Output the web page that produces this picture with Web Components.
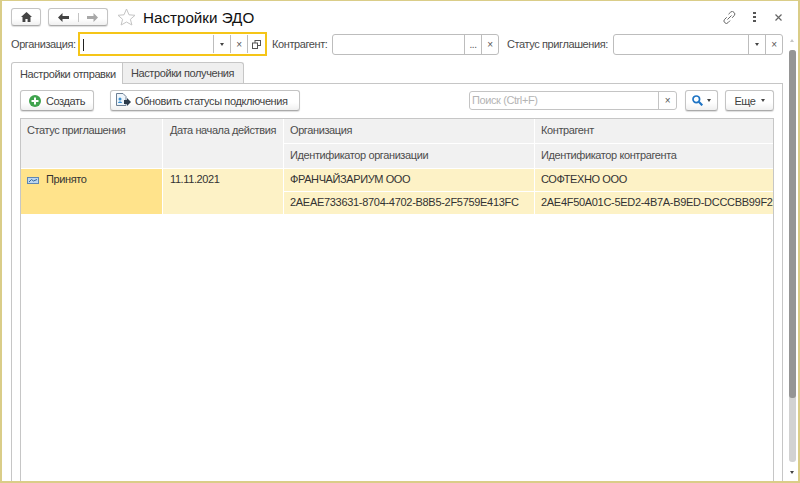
<!DOCTYPE html>
<html><head><meta charset="utf-8">
<style>
html,body{margin:0;padding:0;background:#fff}
body{font:11px "Liberation Sans",Arial,sans-serif;letter-spacing:-.4px;color:#4b4b4b}
</style></head><body>
<template id="t-btn"><style>
:host{display:inline-flex;box-sizing:border-box;height:21px;align-items:center;justify-content:center;gap:5px;background:linear-gradient(#fff,#fff 60%,#f0f0f0);border:1px solid #c4c4c4;border-bottom-color:#aaa;border-radius:3px;box-shadow:0 1px 1px #ddd;color:#3f3f3f;white-space:nowrap;flex:none}
</style><slot></slot></template>
<template id="t-field"><style>
:host{display:flex;box-sizing:border-box;height:21px;border:1px solid #bdbdbd;border-radius:3px;background:#fff;flex:none}
.i{flex:1}
</style><div class="i"></div><slot></slot></template>
<template id="t-cell"><style>
:host{display:flex;align-items:center;justify-content:center;box-sizing:border-box;width:17px;border-left:1px solid #bdbdbd;color:#555;font-size:10px;flex:none}
</style><slot></slot></template>
<template id="t-tab"><style>
:host{display:flex;box-sizing:border-box;align-items:center;height:21px;padding:0 8px;border:1px solid #c6c6c6;border-left:0;border-bottom:0;border-radius:0 3px 0 0;background:#efefef;color:#444;white-space:nowrap}
:host([active]){background:#fff;border-left:1px solid #c6c6c6;border-radius:3px 0 0 0;position:relative;z-index:1;height:22px}
</style><slot></slot></template>
<template id="t-hcell"><style>
:host{display:flex;box-sizing:border-box;padding:5px 6px 0;background:#f1f1f1;color:#4d4d4d;white-space:nowrap;overflow:hidden}
:host([w]){padding-left:7px}
</style><slot></slot></template>
<template id="t-cellb"><style>
:host{display:flex;box-sizing:border-box;padding:4px 6px 0;background:#fdf2c6;color:#333;white-space:nowrap;overflow:hidden}
:host([w]){padding-left:7px}
:host([hot]){background:#ffe38b}
:host([id2]){letter-spacing:-.3px;padding-right:0}
</style><slot></slot></template>
<template id="t-win"><style>
:host{display:flex;flex-direction:column;box-sizing:border-box;width:800px;height:483px;border:solid #dacd88;border-width:1px 2px 2px 2px;background:#fff;overflow:hidden;position:relative}
.top{display:flex;align-items:center;height:18px;margin:7px 0 0 9px;flex:none}
.top h1{font:400 15.2px "Liberation Sans",Arial,sans-serif;letter-spacing:0;color:#111;margin:0 0 0 7px}
.sp{flex:1}
.ico{display:flex;align-items:center;margin-right:16px}
.row{display:flex;align-items:center;height:24px;margin:6px 0 0 9px;flex:none}
.row>span{white-space:nowrap;flex:none}
.focus{box-sizing:border-box;display:flex;width:189px;height:24px;border:2px solid #f5c518;margin:0 5px 0 0;flex:none;padding:1px 0}
.focus .t{flex:1;position:relative}
.focus .t i{position:absolute;left:3px;top:4px;height:12px;width:1px;background:#222}
.focus span{width:17px;border-left:1px solid #bdbdbd;display:flex;align-items:center;justify-content:center;font-size:10px;color:#555;box-sizing:border-box}
.tabs{display:flex;margin:6px 0 0 9px;flex:none;height:21px}
.panel{box-sizing:border-box;flex:1;width:772px;margin-left:9px;border:1px solid #c6c6c6;border-bottom:0;padding:6px 8px 0;display:flex;flex-direction:column;min-height:0}
.bar{display:flex;align-items:center;height:21px;flex:none}
.tbl{box-sizing:border-box;margin-top:7px;flex:1;border:1px solid #c6c6c6;border-bottom:0;width:754px;min-height:0;display:grid;grid-template-columns:141px 120px 250px 1fr;grid-template-rows:24px 24px 22px 22px;gap:1px;background:#fff;align-content:start}
.s2{grid-row:span 2}
.scroll{position:absolute;left:787px;top:0;bottom:0;width:7px}
.thumb{position:absolute;left:0;top:49px;height:412px;width:7px;background:#d2d2d2;border-radius:3px}
.thumb2{position:absolute;left:0;top:49px;height:348px;width:7px;background:#959595;border-radius:3px}
.up{position:absolute;left:1px;top:38px;border:2.5px solid transparent;border-top:0;border-bottom:3px solid #c4c4c4}
.dn{position:absolute;left:1px;top:470px;border:2.5px solid transparent;border-bottom:0;border-top:3px solid #444}
.sr{box-sizing:border-box;width:208px;height:19px;margin-left:169px;border:1px solid #c4c4c4;border-radius:3px;display:flex;color:#b4b4b4;flex:none}
.sr b{flex:1;font-weight:400;padding:2px 0 0 2px}
.sr span{width:17px;border-left:1px solid #c4c4c4;display:flex;align-items:center;justify-content:center;color:#555;font-size:10px}
.ar{display:inline-block;border:2.5px solid transparent;border-bottom:0;border-top:3px solid #444}
</style>
<div class="top">
 <x-btn style="width:30px;height:18px"><svg width="11" height="10" viewBox="0 0 11 10"><path d="M5.5 0 0 5H1.5V10H4.4V7H6.6V10H9.5V5H11Z" fill="#444"/></svg></x-btn>
 <x-btn style="width:60px;height:18px;margin-left:7px;gap:0;justify-content:flex-start">
  <span style="width:29px;display:flex;justify-content:center;border-right:1px solid #c4c4c4"><svg width="11" height="9" viewBox="0 0 11 9"><path d="M4.5 0 0 4.5 4.5 9V6H11V3H4.5Z" fill="#444"/></svg></span>
  <span style="width:29px;display:flex;justify-content:center"><svg width="11" height="9" viewBox="0 0 11 9"><path d="M6.5 0 11 4.5 6.5 9V6H0V3H6.5Z" fill="#a8a8a8"/></svg></span>
 </x-btn>
 <svg style="margin-left:9px" width="19" height="18" viewBox="0 0 19 18"><path d="M9.5 1 12 6.8 18 7.3 13.4 11.3 14.9 17 9.5 14 4.1 17 5.6 11.3 1 7.3 7 6.8Z" fill="#fff" stroke="#c4c4c4"/></svg>
 <h1>Настройки ЭДО</h1>
 <div class="sp"></div>
 <div class="ico">
  <svg width="13" height="13" viewBox="0 0 13 13" fill="none" stroke="#666"><path d="M5.5 3.2 7.6 1.2a2.2 2.2 0 0 1 3.4 .2 2.2 2.2 0 0 1 .2 3.2L9.2 6.8M7 9.6 5 11.7a2.2 2.2 0 0 1-3.3-.1 2.2 2.2 0 0 1-.1-3.2L3.7 6.3M4.5 8.5 8.5 4.5"/></svg>
  <svg style="margin-left:17px" width="3" height="10" viewBox="0 0 3 10" fill="#555"><rect y="0" width="3" height="2"/><rect y="4" width="3" height="2"/><rect y="8" width="3" height="2"/></svg>
  <svg style="margin-left:19px" width="7" height="7" viewBox="0 0 7 7" stroke="#666" stroke-width="1.2"><path d="M.5 .5 6.5 6.5M6.5 .5 .5 6.5"/></svg>
 </div>
</div>
<div class="row">
 <span style="width:67px">Организация:</span>
 <div class="focus"><div class="t"><i></i></div><span><em class="ar"></em></span><span>×</span><span style="width:18px"><svg width="9" height="9" viewBox="0 0 9 9" fill="none" stroke="#555"><rect x="3" y=".5" width="5.5" height="5"/><rect x=".5" y="3" width="5" height="5.5" fill="#fff"/></svg></span></div>
 <span style="width:60px">Контрагент:</span>
 <x-field style="width:167px"><x-cell>...</x-cell><x-cell>×</x-cell></x-field>
 <span style="margin-left:8px;width:106px">Статус приглашения:</span>
 <x-field style="width:170px"><x-cell><em class="ar"></em></x-cell><x-cell>×</x-cell></x-field>
</div>
<div class="tabs"><x-tab active style="width:112px">Настройки отправки</x-tab><x-tab style="width:121px">Настройки получения</x-tab></div>
<div class="panel">
 <div class="bar">
  <x-btn style="width:74px"><svg width="12" height="12" viewBox="0 0 12 12"><circle cx="6" cy="6" r="6" fill="#3fa34d"/><path d="M6 2.5V9.5M2.5 6H9.5" stroke="#fff" stroke-width="2"/></svg>Создать</x-btn>
  <x-btn style="width:190px;margin-left:16px;justify-content:flex-start;padding-left:4px;gap:4px"><svg width="16" height="15" viewBox="0 0 16 15"><path d="M1.5 .5H8L11 3.5V12.5H1.5Z" fill="#eef5fb" stroke="#6c7f94"/><circle cx="5" cy="6" r="1.5" fill="#3c8fd0"/><path d="M3 10c0-2 4-2 4 0Z" fill="#3c8fd0"/><path d="M9 7h3V5l4 4-4 4v-2H9Z" fill="#2b3a4a"/></svg>Обновить статусы подключения</x-btn>
  <div class="sr"><b>Поиск (Ctrl+F)</b><span>×</span></div>
  <x-btn style="width:33px;margin-left:8px;gap:4px"><svg width="11" height="11" viewBox="0 0 11 11" fill="none" stroke="#1f74c4" stroke-width="1.7"><circle cx="4.3" cy="4.3" r="3.3"/><path d="M6.8 6.8 10.3 10.3" stroke-width="2.2"/></svg><em class="ar"></em></x-btn>
  <x-btn style="width:49px;margin-left:7px;gap:5px">Еще<em class="ar"></em></x-btn>
 </div>
 <div class="tbl">
  <x-h class="s2">Статус приглашения</x-h>
  <x-h class="s2" w>Дата начала действия</x-h>
  <x-h>Организация</x-h>
  <x-h>Контрагент</x-h>
  <x-h>Идентификатор организации</x-h>
  <x-h>Идентификатор контрагента</x-h>
  <x-c class="s2" hot><svg style="margin:4px 7px 0 0;flex:none" width="12" height="7" viewBox="0 0 12 7"><rect x=".5" y=".5" width="11" height="6" fill="#bcd6ef" stroke="#5f86b3"/><path d="M2 5 4.5 2.5 6.5 4 10 2.5" fill="none" stroke="#35659b"/></svg><span>Принято</span></x-c>
  <x-c class="s2" w>11.11.2021</x-c>
  <x-c>ФРАНЧАЙЗАРИУМ ООО</x-c>
  <x-c>СОФТЕХНО ООО</x-c>
  <x-c id2>2AEAE733631-8704-4702-B8B5-2F5759E413FC</x-c>
  <x-c id2>2AE4F50A01C-5ED2-4B7A-B9ED-DCCCBB99F2...</x-c>
 </div>
</div>
<div class="scroll"><div class="up"></div><div class="thumb"></div><div class="thumb2"></div><div class="dn"></div></div>
</template>
<x-win></x-win>
<script>
const def=(n,t)=>customElements.define(n,class extends HTMLElement{constructor(){super();this.attachShadow({mode:'open'}).append(document.getElementById(t).content.cloneNode(true))}});
def('x-btn','t-btn');def('x-field','t-field');def('x-cell','t-cell');def('x-tab','t-tab');def('x-h','t-hcell');def('x-c','t-cellb');def('x-win','t-win');
</script>
</body></html>
